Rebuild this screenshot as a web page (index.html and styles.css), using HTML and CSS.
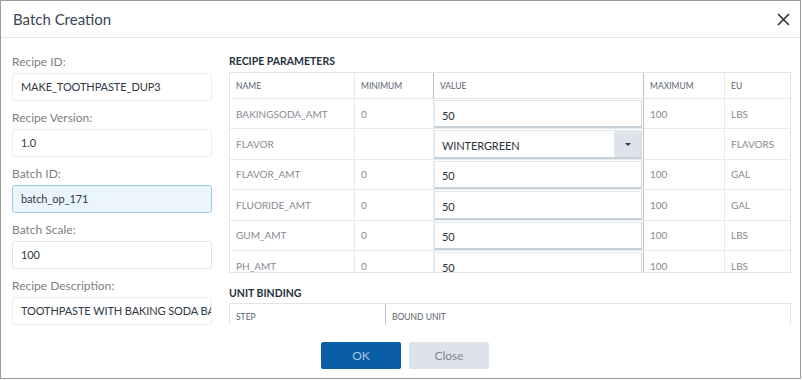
FILE: index.html
```html
<!DOCTYPE html>
<html>

<head>
    <title>Batch Creation</title>
    <link rel="stylesheet" href="styles.css">
</head>

<body>

    <!-- Batch creation dialog -->
    <div class="dialog">
        <div class="dialog-header">
            <p class="dialog-title">Batch Creation</p>
            <span class="close">
                <svg width="13" height="13" viewBox="0 0 13 13">
                    <path d="M1 1 L12 12 M12 1 L1 12" stroke="#2b2f33" stroke-width="1.6" fill="none" />
                </svg>
            </span>
        </div>

        <div class="dialog-body">
            <!-- recipe fields -->
            <div class="fields">
                <div class="field">
                    <label>Recipe ID:</label>
                    <div class="input readonly">MAKE_TOOTHPASTE_DUP3</div>
                </div>
                <div class="field">
                    <label>Recipe Version:</label>
                    <div class="input readonly">1.0</div>
                </div>
                <div class="field">
                    <label>Batch ID:</label>
                    <div class="input focused">batch_op_171</div>
                </div>
                <div class="field">
                    <label>Batch Scale:</label>
                    <div class="input">100</div>
                </div>
                <div class="field">
                    <label>Recipe Description:</label>
                    <div class="input readonly">TOOTHPASTE WITH BAKING SODA BASE</div>
                </div>
            </div>

            <!-- parameter tables -->
            <div class="tables">
                <h4 class="section-title">RECIPE PARAMETERS</h4>
                <div class="grid-wrap params-wrap">
                    <div class="grid params">
                        <div class="th">NAME</div>
                        <div class="th">MINIMUM</div>
                        <div class="th strong">VALUE</div>
                        <div class="th strong">MAXIMUM</div>
                        <div class="th">EU</div>

                        <div class="td">BAKINGSODA_AMT</div>
                        <div class="td">0</div>
                        <div class="td value"><div class="cell-input">50</div></div>
                        <div class="td strong">100</div>
                        <div class="td">LBS</div>

                        <div class="td">FLAVOR</div>
                        <div class="td"></div>
                        <div class="td value">
                            <div class="cell-select">
                                <span>WINTERGREEN</span>
                                <span class="caret"></span>
                            </div>
                        </div>
                        <div class="td strong"></div>
                        <div class="td">FLAVORS</div>

                        <div class="td">FLAVOR_AMT</div>
                        <div class="td">0</div>
                        <div class="td value"><div class="cell-input">50</div></div>
                        <div class="td strong">100</div>
                        <div class="td">GAL</div>

                        <div class="td">FLUORIDE_AMT</div>
                        <div class="td">0</div>
                        <div class="td value"><div class="cell-input">50</div></div>
                        <div class="td strong">100</div>
                        <div class="td">GAL</div>

                        <div class="td">GUM_AMT</div>
                        <div class="td">0</div>
                        <div class="td value"><div class="cell-input">50</div></div>
                        <div class="td strong">100</div>
                        <div class="td">LBS</div>

                        <div class="td">PH_AMT</div>
                        <div class="td">0</div>
                        <div class="td value"><div class="cell-input">50</div></div>
                        <div class="td strong">100</div>
                        <div class="td">LBS</div>
                    </div>
                </div>

                <h4 class="section-title unit-title">UNIT BINDING</h4>
                <div class="grid-wrap">
                    <div class="grid units">
                        <div class="th">STEP</div>
                        <div class="th strong">BOUND UNIT</div>
                    </div>
                </div>
            </div>
        </div>

        <div class="dialog-footer">
            <button class="btn btn-primary">OK</button>
            <button class="btn btn-secondary">Close</button>
        </div>
    </div>

</body>

</html>
```

FILE: styles.css
```css
/* Page */
body {
    margin: 0;
    background-color: #ffffff;
    font-family: Lato, "Open Sans", sans-serif;
}

/* Dialog frame */
.dialog {
    width: 801px;
    height: 379px;
    box-sizing: border-box;
    border: 1px solid #9a9a9a;
    display: flex;
    flex-direction: column;
    background-color: #ffffff;
}

.dialog-header {
    height: 36px;
    flex-shrink: 0;
    display: flex;
    justify-content: space-between;
    align-items: center;
    padding: 0 10px 0 12px;
    border-bottom: 1px solid #e1e7ec;
}

.dialog-title {
    margin: 0;
    font-size: 15px;
    color: #3a4654;
}

.close {
    display: flex;
    cursor: pointer;
}

.dialog-body {
    height: 287px;
    box-sizing: border-box;
    flex-shrink: 0;
    overflow: hidden;
    display: flex;
    gap: 17px;
    padding: 16px 9px 0 11px;
}

/* Left column fields */
.fields {
    width: 200px;
    flex-shrink: 0;
}

.field {
    margin-bottom: 9px;
}

.field label {
    display: block;
    font-size: 12px;
    line-height: 16px;
    color: #7b7f84;
    margin-bottom: 3px;
}

.input {
    height: 28px;
    box-sizing: border-box;
    border: 1px solid #dfe5ea;
    border-radius: 3px;
    padding: 0 8px;
    font-size: 11px;
    letter-spacing: -0.1px;
    line-height: 26px;
    color: #2f3a45;
    white-space: nowrap;
    overflow: hidden;
    text-overflow: clip;
}

.input.readonly {
    border: 1px dotted #d3d9de;
}

.input.focused {
    border-color: #9ecbe3;
    background-color: #eaf6fc;
}

/* Right column tables */
.tables {
    flex: 1;
    min-width: 0;
}

.section-title {
    margin: 0 0 4px;
    font-size: 10.5px;
    line-height: 14px;
    font-weight: bold;
    color: #25313c;
}

.unit-title {
    margin-top: 13px;
    margin-bottom: 3px;
}

.grid-wrap {
    border: 1px solid #dfe5ea;
    overflow: hidden;
}

.params-wrap {
    height: 199px;
}

.grid {
    display: grid;
}

.params {
    grid-template-columns: 124px 79px 210px 81px 1fr;
    grid-template-rows: 26px;
    grid-auto-rows: 30.4px;
}

.units {
    grid-template-columns: 155px 1fr;
    grid-template-rows: 26px;
}

.th,
.td {
    display: flex;
    align-items: center;
    padding-left: 6px;
    border-left: 1px solid #e6ebef;
    border-bottom: 1px solid #e6ebef;
    white-space: nowrap;
    overflow: hidden;
}

.th:first-child,
.params .td:nth-child(5n+1) {
    border-left: none;
}

.th {
    font-size: 8.5px;
    color: #5a636c;
}

.td {
    font-size: 10px;
    color: #868b91;
}

.th.strong,
.td.strong {
    border-left-color: #b9c4cc;
}

.td.value {
    padding: 1px 1px 0 0;
    align-items: stretch;
}

.cell-input,
.cell-select {
    flex: 1;
    display: flex;
    align-items: center;
    box-sizing: border-box;
    border: 1px solid #e3e8ec;
    border-bottom: 2px solid #c7d0d7;
    border-right: 1px solid #cfd7dd;
    padding: 3px 0 0 7px;
    font-size: 11px;
    letter-spacing: -0.1px;
    color: #2a333c;
}

.cell-select {
    justify-content: space-between;
    padding-right: 0;
}

.caret {
    width: 27px;
    align-self: stretch;
    margin-top: -3px;
    background-color: #dde3e8;
    border-radius: 2px;
    display: flex;
    align-items: center;
    justify-content: center;
}

.caret::after {
    content: "";
    border-left: 3px solid transparent;
    border-right: 3px solid transparent;
    border-top: 3px solid #333a40;
}

/* Footer buttons */
.dialog-footer {
    flex: 1;
    display: flex;
    justify-content: center;
    gap: 8px;
    padding: 17px 0 0 9px;
}

.btn {
    width: 80px;
    height: 27px;
    border: none;
    border-radius: 2px;
    font-family: Lato, "Open Sans", sans-serif;
    font-size: 12px;
    cursor: pointer;
}

.btn-primary {
    background-color: #0a5ea6;
    color: #a8c4e2;
}

.btn-secondary {
    background-color: #dde3e9;
    color: #808890;
}
```
